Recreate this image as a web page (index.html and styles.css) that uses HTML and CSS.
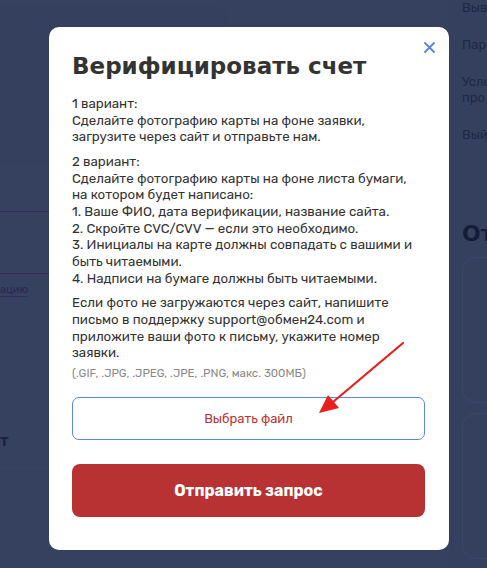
FILE: index.html
```html
<!DOCTYPE html>
<html lang="ru">
<head>
<meta charset="utf-8">
<title>Верифицировать счет</title>
<link rel="stylesheet" href="styles.css">
</head>
<body>
<div class="page">
  <main class="main">
    <div class="panel"></div>
    <div class="rule"></div>
    <div class="rule rule-2"></div>
    <a class="link">ацию</a>
    <div class="sub">т</div>
    <div class="rule rule-3"></div>
  </main>
  <aside class="side">
    <ul class="menu">
      <li>Выв</li>
      <li>Пар</li>
      <li>Усло<br>про</li>
      <li>Вый</li>
    </ul>
    <div class="band"></div>
    <h2 class="side-title">От</h2>
    <div class="card"></div>
    <div class="card"></div>
    <div class="card"></div>
  </aside>
</div>

<div class="modal">
  <button class="close" aria-label="Закрыть">
    <svg width="11" height="11" viewBox="0 0 11 11"><path d="M1 1L10 10M10 1L1 10" stroke="#5b82e8" stroke-width="1.8" stroke-linecap="round"/></svg>
  </button>
  <h1 class="title">Верифицировать счет</h1>
  <p class="text">1 вариант:<br>Сделайте фотографию карты на фоне заявки,<br>загрузите через сайт и отправьте нам.</p>
  <p class="text">2 вариант:<br>Сделайте фотографию карты на фоне листа бумаги,<br>на котором будет написано:<br>1. Ваше ФИО, дата верификации, название сайта.<br>2. Скройте CVC/CVV — если это необходимо.<br>3. Инициалы на карте должны совпадать с вашими и<br>быть читаемыми.<br>4. Надписи на бумаге должны быть читаемыми.</p>
  <p class="text">Если фото не загружаются через сайт, напишите<br>письмо в поддержку support@обмен24.com и<br>приложите ваши фото к письму, укажите номер<br>заявки.</p>
  <p class="hint">(.GIF, .JPG, .JPEG, .JPE, .PNG, макс. 300МБ)</p>
  <button class="file-btn">Выбрать файл</button>
  <button class="submit-btn">Отправить запрос</button>
</div>

<svg class="arrow" width="487" height="568" viewBox="0 0 487 568">
  <line x1="403" y1="343" x2="333" y2="402" stroke="#e8201c" stroke-width="2.2" stroke-linecap="round"/>
  <polygon points="319,413 328,395 339,408" fill="#e8201c"/>
</svg>
</body>
</html>
```
FILE: styles.css
```css
* { box-sizing: border-box; }
html, body { margin: 0; padding: 0; }
body {
  width: 487px;
  height: 568px;
  overflow: hidden;
  background: #36415f;
  font-family: "Rubik", "Noto Sans", "Liberation Sans", sans-serif;
  position: relative;
}
.page {
  display: grid;
  grid-template-columns: 449px 1fr;
  height: 568px;
}
.main {
  display: flex;
  flex-direction: column;
}
.panel {
  height: 160px;
  margin: 6px 219px 0 0;
  border-radius: 0 16px 16px 0;
  background: #35405e;
}
.rule {
  height: 1px;
  background: #3d2b57;
  margin-top: 45px;
}
.rule-2 { margin-top: 61px; }
.link {
  font-size: 11px;
  color: #2a2850;
  margin-top: 10px;
  align-self: flex-start;
  border-bottom: 1px solid #3d2b57;
  line-height: 12px;
}
.sub {
  margin-top: 134px;
  font-size: 16px;
  color: #1d2240;
  font-weight: 600;
  align-self: flex-start;
}
.rule-3 { margin-top: 18px; background: #39445f; }
.side {
  background: #35405e;
  padding-left: 13px;
  overflow: hidden;
  display: flex;
  flex-direction: column;
}
.menu {
  list-style: none;
  margin: 0;
  padding: 0;
  font-size: 13px;
  line-height: 16px;
  color: #202844;
  white-space: nowrap;
}
.menu li { margin-bottom: 21px; }
.band {
  height: 20px;
  margin-left: -13px;
  background: #374262;
  margin-top: -6px;
}
.side-title {
  margin: 63px 0 0 0;
  font-size: 22px;
  line-height: 26px;
  font-family: "DejaVu Sans", sans-serif;
  font-weight: 700;
  color: #151c38;
  white-space: nowrap;
}
.card {
  height: 146px;
  width: 120px;
  border: 1px solid #3c4767;
  border-radius: 14px;
  margin-top: 10px;
  flex-shrink: 0;
}
.card:first-of-type { margin-top: 16px; }

.modal {
  position: absolute;
  left: 49px;
  top: 27px;
  width: 400px;
  background: #fff;
  border-radius: 10px;
  padding: 24px 24px 33px 23px;
}
.close {
  position: absolute;
  top: 15px;
  right: 14px;
  width: 11px;
  height: 11px;
  padding: 0;
  border: 0;
  background: none;
  display: flex;
}
.title {
  margin: 0 0 15px 0;
  font-family: "DejaVu Sans", sans-serif;
  font-weight: 700;
  font-size: 23px;
  line-height: 30px;
  color: #333;
  white-space: nowrap;
}
.text {
  margin: 0 0 8px 0;
  font-size: 13.3px;
  line-height: 16.65px;
  color: #333;
}
.hint {
  margin: -3px 0 18px 0;
  font-size: 11.5px;
  line-height: 12px;
  color: #8a8a8a;
}
.file-btn {
  display: block;
  width: 100%;
  height: 43px;
  border: 1px solid #5b86e8;
  border-radius: 7px;
  background: #fff;
  color: #c0322f;
  font-family: inherit;
  font-size: 13px;
}
.submit-btn {
  display: block;
  width: 100%;
  height: 53px;
  margin-top: 24px;
  border: 0;
  border-radius: 8px;
  background: #b83233;
  color: #fff;
  font-family: inherit;
  font-weight: 700;
  font-size: 16px;
}
.arrow {
  position: absolute;
  left: 0;
  top: 0;
  pointer-events: none;
}
```
